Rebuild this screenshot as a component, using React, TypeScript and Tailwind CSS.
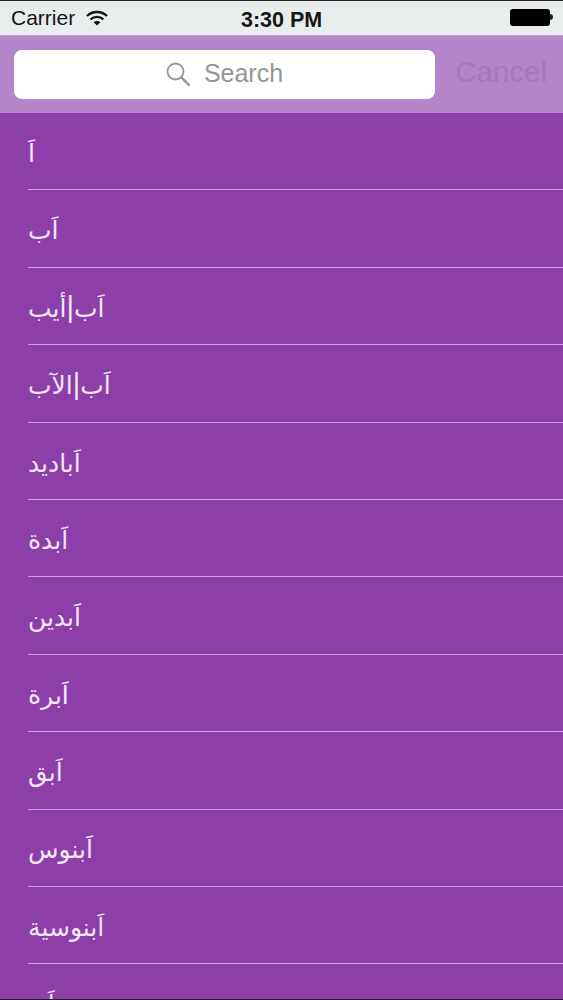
const words = [
  ["اَ"],
  ["اَب"],
  ["اَب", "أيب"],
  ["اَب", "الآب"],
  ["اَباديد"],
  ["اَبدة"],
  ["اَبدين"],
  ["اَبرة"],
  ["اَبق"],
  ["اَبنوس"],
  ["اَبنوسية"],
  ["اَبو"],
];

function Wifi() {
  return (
    <svg width="22" height="16" viewBox="0 0 22 16" fill="none" stroke="#151515" strokeWidth="2.4">
      <path d="M1 6 C6.5 0.6 15.5 0.6 21 6" />
      <path d="M4.6 9.4 C8.2 6 13.8 6 17.4 9.4" />
      <path d="M11 15.5 L7.6 12.2 C9.6 10.6 12.4 10.6 14.4 12.2 Z" fill="#151515" stroke="none" />
    </svg>
  );
}

function Magnifier() {
  return (
    <svg width="24" height="24" viewBox="0 0 24 24" fill="none" stroke="#959595" strokeWidth="1.8">
      <circle cx="9.5" cy="9.5" r="8" />
      <path d="M15.3 15.3 L23 23" strokeWidth="2.4" strokeLinecap="round" />
    </svg>
  );
}

export default function App() {
  return (
    <div className="h-[1000px] w-[563px] overflow-hidden bg-[#8c3fa9] font-['Liberation_Sans',sans-serif] flex flex-col border-y border-[#222]">
      {/* Status bar */}
      <div className="h-[34px] shrink-0 bg-[#e9eced] flex items-center justify-between pl-[11px] pr-[10px] text-[#151515] relative">
        <div className="flex items-center gap-[11px] text-[21px]">
          <span>Carrier</span>
          <Wifi />
        </div>
        <div className="absolute left-[241px] top-[3px] text-[21.5px] font-semibold">3:30 PM</div>
        <div className="flex items-center mb-[2px]">
          <div className="w-[40px] h-[17px] bg-black rounded-[3px]" />
          <div className="w-[3px] h-[6px] bg-[#222] rounded-r-sm" />
        </div>
      </div>

      {/* Search header */}
      <div className="h-[78px] shrink-0 bg-[#b685c9] border-t border-[#c99bd8] flex items-center pl-[14px] pr-[16px] justify-between">
        <div className="w-[421px] h-[49px] mb-[1px] bg-white rounded-[8px] flex items-center justify-center gap-[14px] text-[#959595] text-[25px]">
          <Magnifier />
          <span>Search</span>
        </div>
        <span className="text-[29.5px] text-[#a777ba] mb-[4px]">Cancel</span>
      </div>

      {/* Word list */}
      <div className="flex-1 overflow-hidden font-['DejaVu_Sans',sans-serif]">
        {words.map((w) => (
          <div key={w.join("|")} className="pl-[28px]">
            <div className="h-[77.4px] border-b border-[#c9a0d8] flex items-center pt-[5px] text-[25px] text-[#f4e6f7]">
              <span dir="rtl">
                {w[0]}
                {w[1] && <span className="font-['Liberation_Sans',sans-serif] text-[29px] leading-none">|</span>}
                {w[1]}
              </span>
            </div>
          </div>
        ))}
      </div>
    </div>
  );
}
